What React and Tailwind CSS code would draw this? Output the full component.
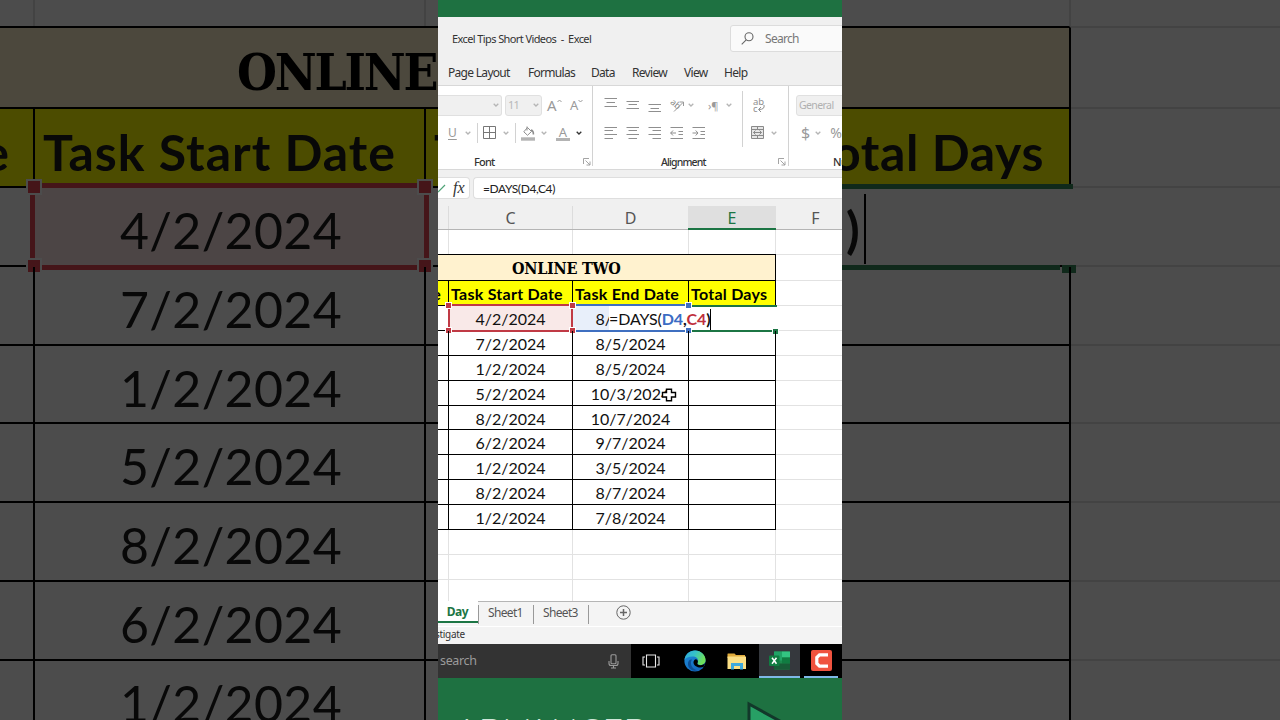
import clsx from 'clsx'

const rows = [
  ['4/2/2024', '8/5/2024'],
  ['7/2/2024', '8/5/2024'],
  ['1/2/2024', '8/5/2024'],
  ['5/2/2024', '10/3/2024'],
  ['8/2/2024', '10/7/2024'],
  ['6/2/2024', '9/7/2024'],
  ['1/2/2024', '3/5/2024'],
  ['8/2/2024', '8/7/2024'],
  ['1/2/2024', '7/8/2024'],
]

const tabs = [
  ['Page Layout', 'w-[80px]'],
  ['Formulas', 'w-[63px]'],
  ['Data', 'w-[41px]'],
  ['Review', 'w-[52px]'],
  ['View', 'w-[40px]'],
  ['Help', 'w-[40px]'],
]

function Chevron({ className = 'text-[#b5b5b5]' }) {
  return (
    <svg className={clsx('w-[6px] h-[4px] shrink-0', className)} viewBox="0 0 6 4" fill="none" stroke="currentColor" strokeWidth="1.3">
      <path d="M0.7 0.7 L3 3 L5.3 0.7" />
    </svg>
  )
}

function Lines({ d }) {
  return (
    <svg className="w-[14px] h-[14px] shrink-0" viewBox="0 0 14 14" fill="none" stroke="#8f8f8f" strokeWidth="1">
      <path d={d} />
    </svg>
  )
}

function Launcher() {
  return (
    <svg className="w-[8px] h-[8px] shrink-0" viewBox="0 0 8 8" fill="none" stroke="#9a9a9a" strokeWidth="0.9">
      <path d="M0.5 6 V0.5 H6 M2.5 2.5 L7 7 M7 3.5 V7 H3.5" />
    </svg>
  )
}

function Ribbon() {
  return (
    <div className="flex h-[85px] shrink-0 bg-white border-y border-[#d8d8d8] text-[#9a9a9a]">
      {/* Font */}
      <div className="w-[155px] shrink-0 border-r border-[#d2d2d2] mb-[3px] pt-[5px]">
        <div className="flex items-center h-[28px]">
          <div className="flex items-center justify-end w-[64px] h-[21px] pr-[2px] bg-[#f0f0f0] border border-l-0 border-[#e0e0e0] rounded-r-[3px]">
            <Chevron />
          </div>
          <div className="flex items-center justify-between w-[37px] h-[21px] ml-[3px] px-[2px] bg-[#f0f0f0] border border-[#e0e0e0] rounded-[3px]">
            <span className="text-[11px] tracking-[-0.8px] text-[#b8b8b8]">11</span>
            <Chevron />
          </div>
          <div className="flex w-[23px] ml-[5px] text-[15px] leading-none">
            A
            <svg className="w-[5px] h-[4px] mt-[1px]" viewBox="0 0 5 4" fill="none" stroke="currentColor">
              <path d="M0.5 3 L2.5 1 L4.5 3" />
            </svg>
          </div>
          <div className="flex text-[13px] leading-none">
            A
            <svg className="w-[5px] h-[4px]" viewBox="0 0 5 4" fill="none" stroke="currentColor">
              <path d="M0.5 1 L2.5 3 L4.5 1" />
            </svg>
          </div>
        </div>
        <div className="flex items-center h-[28px]">
          <span className="w-[27px] pl-[10px] text-[12px] underline underline-offset-2">U</span>
          <Chevron />
          <div className="w-px h-[20px] ml-[6px] bg-[#d2d2d2]" />
          <svg className="w-[14px] h-[14px] ml-[5px] mr-[6px]" viewBox="0 0 14 14" fill="none" stroke="#777">
            <path d="M0.5 0.5 H12.5 V12.5 H0.5 Z M6.5 0.5 V12.5 M0.5 6.5 H12.5" />
          </svg>
          <Chevron />
          <div className="w-px h-[20px] ml-[6px] bg-[#d2d2d2]" />
          <svg className="w-[14px] h-[15px] ml-[5px] mr-[6px]" viewBox="0 0 14 15" fill="none" stroke="#8d8d8d">
            <path d="M6 0.5 V4.5 M6.5 1.5 L10.5 5.5 L6.5 9.3 L2.8 5.8 Z" />
            <path d="M10 4 Q12.6 4.6 12.4 8.5" strokeWidth="1.6" />
            <path d="M0 13 H14" strokeWidth="3.4" stroke="#b3b3b3" />
          </svg>
          <Chevron />
          <div className="flex flex-col items-center w-[14px] ml-[9px] mr-[6px]">
            <span className="text-[13px] leading-[12px]">A</span>
            <div className="w-[14px] h-[3px] bg-[#b3b3b3]" />
          </div>
          <Chevron className="text-[#333]" />
        </div>
        <div className="flex items-center h-[16px] mt-[7px]">
          <span className="w-[145px] pl-[36px] text-[11px] tracking-[-0.8px] font-medium text-[#333]">Font</span>
          <Launcher />
        </div>
      </div>

      {/* Alignment */}
      <div className="w-[196px] shrink-0 border-r border-[#d2d2d2] mb-[3px] pt-[5px]">
        <div className="flex">
          <div className="w-[150px] border-r border-[#d2d2d2]">
            <div className="flex items-center h-[28px] pl-[11px]">
              <Lines d="M0.5 0.5 H13 M2.5 4.5 H11 M0.5 8.5 H13" />
              <div className="w-[8px]" />
              <Lines d="M0.5 3.5 H13 M2.5 6.5 H11 M0.5 10.5 H13" />
              <div className="w-[8px]" />
              <Lines d="M0.5 6.5 H13 M2.5 10.5 H11 M0.5 13.5 H13" />
              <svg className="w-[15px] h-[15px] ml-[8px] mr-[3px]" viewBox="0 0 15 15" fill="none" stroke="#999">
                <text x="0" y="8" fontSize="9" fill="#888" stroke="none" transform="rotate(40 4 6)">ab</text>
                <path d="M4 13.5 L13 4.5 M9.5 4 H13.5 V8" />
              </svg>
              <Chevron />
              <span className="ml-[14px] mr-[5px] w-[13px] text-[11px] leading-none tracking-tight whitespace-nowrap">›¶</span>
              <Chevron />
            </div>
            <div className="flex items-center h-[28px] pl-[11px]">
              <Lines d="M0.5 1.5 H13 M0.5 4.5 H9 M0.5 8.5 H13 M0.5 12.5 H9" />
              <div className="w-[8px]" />
              <Lines d="M0.5 1.5 H13 M2.5 4.5 H11 M0.5 8.5 H13 M2.5 12.5 H11" />
              <div className="w-[8px]" />
              <Lines d="M0.5 1.5 H13 M4.5 4.5 H13 M0.5 8.5 H13 M4.5 12.5 H13" />
              <div className="w-[8px]" />
              <Lines d="M0.5 1.5 H13 M8.5 5.5 H13 M8.5 8.5 H13 M0.5 12.5 H13 M0.5 7 H6 M3 4.5 L0.7 7 L3 9.5" />
              <div className="w-[8px]" />
              <Lines d="M0.5 1.5 H13 M8.5 5.5 H13 M8.5 8.5 H13 M0.5 12.5 H13 M0.5 7 H6 M3.7 4.5 L6 7 L3.7 9.5" />
            </div>
          </div>
          <div>
            <div className="flex items-center h-[28px] pl-[9px]">
              <svg className="w-[14px] h-[15px]" viewBox="0 0 14 15" fill="none" stroke="#8f8f8f">
                <text x="1" y="7" fontSize="9.5" fill="#8f8f8f" stroke="none">ab</text>
                <text x="1" y="14" fontSize="9.5" fill="#8f8f8f" stroke="none">c</text>
                <path d="M12 7 Q13 11.5 7 11.5 M9 9 L6.5 11.5 L9 14" />
              </svg>
            </div>
            <div className="flex items-center h-[28px] pl-[8px]">
              <svg className="w-[14px] h-[14px] mr-[6px]" viewBox="0 0 14 14" fill="none" stroke="#8a8a8a">
                <path d="M0.5 0.5 H12.5 V12.5 H0.5 Z" fill="#e6e6e6" />
                <path d="M0.5 3.5 H12.5 M0.5 9.5 H12.5 M6.5 0.5 V3.5 M6.5 9.5 V12.5" />
                <path d="M2.5 6.5 H10.5 M4.5 4.5 L2.5 6.5 L4.5 8.5 M8.5 4.5 L10.5 6.5 L8.5 8.5" />
              </svg>
              <Chevron />
            </div>
          </div>
        </div>
        <div className="flex items-center h-[16px] mt-[7px]">
          <span className="w-[185px] pl-[68px] pt-px text-[10.5px] tracking-[-0.85px] font-medium text-[#333]">Alignment</span>
          <Launcher />
        </div>
      </div>

      {/* Number */}
      <div className="w-[53px] shrink-0 overflow-hidden pt-[5px]">
        <div className="flex items-center h-[28px] pl-[7px]">
          <div className="flex items-center w-[80px] shrink-0 h-[21px] pl-[2px] pt-px bg-[#f0f0f0] border border-[#e0e0e0] rounded-[3px] text-[10.5px] tracking-[-0.6px] text-[#b0b0b0]">
            General
          </div>
        </div>
        <div className="flex items-center h-[28px] pl-[12px]">
          <span className="w-[20px] text-[16px] leading-none">$</span>
          <Chevron />
          <span className="ml-[9px] text-[14px] leading-none">%</span>
        </div>
        <div className="h-[16px] mt-[7px] pl-[44px] text-[11px] leading-[16px] tracking-[-0.5px] font-medium text-[#333]">Number</div>
      </div>
    </div>
  )
}

function Handle({ className }) {
  return <div className={clsx('absolute size-[7px] border border-white', className)} />
}

function Sheet() {
  return (
    <div className="h-[371px] shrink-0 overflow-hidden bg-white font-['Lato',sans-serif] text-black">
      <div className="flex h-[25px] border-b border-[#e2e2e2]">
        <div className="w-[11px] border-r border-[#e2e2e2]" />
        <div className="w-[124px] border-r border-[#e2e2e2]" />
        <div className="w-[116px] border-r border-[#e2e2e2]" />
        <div className="w-[87px] border-r border-[#e2e2e2]" />
      </div>
      <div className="flex h-[26px]">
        <div className="w-[338px] pl-[74px] -mt-px border border-l-0 border-black bg-[#fff2cf] font-['DejaVu_Serif_Condensed','DejaVu_Serif',serif] font-bold text-[16px] leading-[28px] tracking-[-0.25px] whitespace-nowrap">
          ONLINE TWO
        </div>
        <div className="flex-1 border-b border-[#e2e2e2]" />
      </div>
      <div className="flex h-[25px] text-[16px] leading-[26px] tracking-[0.25px] font-bold whitespace-nowrap">
        <div className="flex justify-end w-[11px] pr-[7px] border-r border-b border-black bg-[#ffff00]">e</div>
        <div className="w-[124px] pl-[2px] border-r border-b border-black bg-[#ffff00]">Task Start Date</div>
        <div className="w-[116px] pl-[2px] border-r border-b border-black bg-[#ffff00]">Task End Date</div>
        <div className="w-[87px] pl-[2px] border-r border-b border-black bg-[#ffff00]">Total Days</div>
        <div className="flex-1 border-b border-[#e2e2e2]" />
      </div>
      {rows.map(([start, end], i) => (
        <div key={i} className="relative flex h-[24.9px] text-[16px] leading-[26px] text-[#111] text-center whitespace-nowrap">
          <div className="w-[11px] border-r border-b border-black" />
          <div className={clsx('w-[124px] border-r border-b border-black', i === 0 && 'bg-[#f9e9e8]')}>{start}</div>
          <div className={clsx('w-[116px] border-r border-b border-black', i === 0 && 'bg-[#e8effa]')}>{end}</div>
          <div className="w-[87px] border-r border-b border-black" />
          <div className="flex-1 border-b border-[#e2e2e2]" />
          {i === 0 && (
            <>
              {/* formula being typed in E4, spills left over D4 */}
              <div className="absolute left-[171px] right-0 top-0 bottom-px flex items-center pt-[3px] bg-white text-[16px] tracking-[-0.12px]">
                <span>=DAYS(</span>
                <b className="text-[#3b6cc4]">D4</b>
                <b>,</b>
                <b className="text-[#bf2f3d]">C4</b>
                <b>)</b>
                <div className="w-px h-[21px] bg-black" />
              </div>
              <div className="absolute left-[10px] top-[-2px] w-[125px] h-[28px] border-2 border-[#c03a45]" />
              <div className="absolute left-[135px] top-[-2px] w-[115px] h-[28px] border-y-2 border-[#3f6fc0]" />
              <div className="absolute left-[250px] top-[-1px] w-[89px] h-[27px] border-y-2 border-[#1c7544]" />
              <Handle className="left-[7px] top-[-4px] bg-[#c03a45]" />
              <Handle className="left-[131px] top-[-4px] bg-[#c03a45]" />
              <Handle className="left-[7px] top-[21px] bg-[#c03a45]" />
              <Handle className="left-[131px] top-[21px] bg-[#c03a45]" />
              <Handle className="left-[247px] top-[-4px] bg-[#3f6fc0]" />
              <Handle className="left-[247px] top-[21px] bg-[#3f6fc0]" />
              <Handle className="left-[334px] top-[22px] bg-[#1c7544]" />
            </>
          )}
          {i === 3 && (
            <svg className="absolute left-[223px] top-[7px] w-[16px] h-[14px]" viewBox="0 0 16 14" fill="#fff" stroke="#000" strokeWidth="1.4">
              <path d="M5.5 1.2 H10.5 V4.5 H14.5 V9 H10.5 V12.8 H5.5 V9 H1.5 V4.5 H5.5 Z" />
            </svg>
          )}
        </div>
      ))}
      {[0, 1, 2].map((i) => (
        <div key={i} className="flex h-[24.9px] border-b border-[#e2e2e2]">
          <div className="w-[11px] border-r border-[#e2e2e2]" />
          <div className="w-[124px] border-r border-[#e2e2e2]" />
          <div className="w-[116px] border-r border-[#e2e2e2]" />
          <div className="w-[87px] border-r border-[#e2e2e2]" />
        </div>
      ))}
    </div>
  )
}

function Taskbar() {
  return (
    <div className="flex h-[34px] shrink-0 bg-black">
      <div className="flex items-center w-[193px] pl-[2px] bg-[#333] text-[12.5px] tracking-[-0.35px] text-[#9b9b9b]">
        <span className="w-[168px] pt-px">search</span>
        <svg className="w-[11px] h-[15px]" viewBox="0 0 11 15" fill="none" stroke="#9b9b9b" strokeWidth="1.1">
          <rect x="3" y="0.7" width="5" height="9" rx="1" />
          <path d="M1 7 V9.5 Q1 11.5 3 11.5 H8 Q10 11.5 10 9.5 V7 M5.5 11.5 V14 M3 14 H8" />
        </svg>
      </div>
      <div className="flex items-center w-[128px] pl-[11px]">
        <svg className="w-[18px] h-[14px]" viewBox="0 0 18 14" fill="none" stroke="#e8e8e8" strokeWidth="1.1">
          <path d="M4.5 1 H13.5 V13 H4.5 Z M3 3 H1 V11 H3 M15 3 H17 V11 H15" />
        </svg>
        <svg className="w-[22px] h-[22px] ml-[24px]" viewBox="0 0 22 22">
          <defs>
            <linearGradient id="edgeTop" x1="0" y1="0" x2="1" y2="0.4">
              <stop offset="0" stopColor="#2fa8e0" />
              <stop offset="0.5" stopColor="#35c1c8" />
              <stop offset="1" stopColor="#6fe05a" />
            </linearGradient>
            <linearGradient id="edgeLow" x1="0" y1="0" x2="0.8" y2="1">
              <stop offset="0" stopColor="#1f8fdc" />
              <stop offset="1" stopColor="#1263b8" />
            </linearGradient>
          </defs>
          <circle cx="11" cy="11" r="10.6" fill="url(#edgeLow)" />
          <path d="M0.5 10 C1 4 6 0.4 11 0.4 C17 0.4 21.6 5 21.6 10 C21.6 13.5 19 15 16.5 15 C14 15 12.8 14 13.6 12.8 C15 10.5 13.5 6.8 9.5 6.6 C5 6.4 1.5 8 0.5 10 Z" fill="url(#edgeTop)" />
          <path d="M8 9.5 C5.5 13 7.5 19 13 20.3 C9 22 3.5 18.5 4 13 C4.2 10.8 6 9 8 9.5 Z" fill="#0c4f96" />
          <path d="M13.6 12.8 C12.8 14 14 15.2 16.5 15.2 C18.5 15.2 20 14.4 21.2 13 L20 16.4 C17 18.5 10.5 17.5 9.5 13 C9.2 11 10.5 9.3 12 9.2 C13.8 9.6 14.3 11.5 13.6 12.8 Z" fill="#000" />
        </svg>
        <svg className="w-[20px] h-[17px] ml-[21px]" viewBox="0 0 20 17">
          <path d="M0.5 1 Q0.5 0.4 1 0.4 H7.5 L9 2 H18 V5 H0.5 Z" fill="#e0ab3c" />
          <path d="M0.5 3.5 H19 V16 H0.5 Z" fill="#fbdf85" />
          <path d="M4 16.5 V10 H16 V16.5 H13 V13 H7 V16.5 Z" fill="#3fa9dc" />
        </svg>
      </div>
      <div className="flex items-center justify-center w-[41px] bg-[#35383d] border-b-2 border-[#7fb8e8]">
        <svg className="w-[21px] h-[19px] mt-px" viewBox="0 0 21 19">
          <rect x="5" y="0.5" width="16" height="18" rx="1" fill="#1d8a4e" />
          <rect x="5" y="0.5" width="8" height="9" fill="#21a366" />
          <rect x="13" y="0.5" width="8" height="6" fill="#33c481" />
          <rect x="13" y="6.5" width="8" height="6" fill="#107c41" />
          <rect x="5" y="12.5" width="16" height="6" fill="#185c37" />
          <rect x="0" y="4.5" width="10.5" height="10.5" rx="1" fill="#107c41" />
          <path d="M3 6.8 L7.5 12.8 M7.5 6.8 L3 12.8" stroke="#fff" strokeWidth="1.5" />
        </svg>
      </div>
      <div className="flex items-center justify-center w-[34px] ml-[4px] border-b-2 border-[#7fb8e8]">
        <svg className="w-[21px] h-[21px] mt-px" viewBox="0 0 21 21">
          <rect width="21" height="21" rx="2" fill="#f0533f" />
          <path d="M17 4.8 H8.5 L5.8 7.5 V13.5 L8.5 16.2 H17" fill="none" stroke="#fff" strokeWidth="3.2" />
        </svg>
      </div>
    </div>
  )
}

function Phone() {
  return (
    <div className="flex flex-col w-[404px] h-[720px] shrink-0 overflow-hidden bg-[#f0f0f0] font-['Noto_Sans',sans-serif] text-[#333]">
      <div className="h-[17px] shrink-0 bg-[#1e7141]" />
      <div className="flex items-center h-[43px] shrink-0 pl-[14px]">
        <div className="w-[278px] shrink-0 pt-px text-[11px] tracking-[-0.6px] whitespace-pre">Excel Tips Short Videos  -  Excel</div>
        <div className="flex items-center w-[160px] shrink-0 h-[27px] bg-[#fafafa] border border-[#dcdcdc] rounded-[3px] pl-[10px]">
          <svg className="w-[13px] h-[13px]" viewBox="0 0 13 13" fill="none" stroke="#666" strokeWidth="1.1">
            <circle cx="8" cy="4.8" r="4" />
            <path d="M5.2 7.8 L0.7 12.4" />
          </svg>
          <span className="ml-[11px] pt-px text-[12px] tracking-[-0.7px] text-[#777]">Search</span>
        </div>
      </div>
      <div className="flex items-center h-[25px] shrink-0 pl-[10px] text-[12px] tracking-[-0.7px] whitespace-nowrap">
        {tabs.map(([name, width]) => (
          <div key={name} className={clsx('shrink-0', width)}>{name}</div>
        ))}
      </div>
      <Ribbon />

      {/* formula bar */}
      <div className="flex items-center h-[36px] shrink-0">
        <div className="flex items-center h-[22px] w-[32px] bg-white border border-l-0 border-[#dedede] rounded-r-[4px]">
          <svg className="w-[8px] h-[9px] mr-[7px]" viewBox="0 0 8 9" fill="none" stroke="#4fa377" strokeWidth="1.2">
            <path d="M0 8 L7 1" />
          </svg>
          <span className="font-['Liberation_Serif',serif] italic text-[16px] leading-none text-[#333]">fx</span>
        </div>
        <div className="flex-1 h-[22px] ml-[3px] pl-[9px] bg-white border border-r-0 border-[#dedede] rounded-l-[4px] font-['Lato',sans-serif] text-[12px] leading-[22px] tracking-[-0.4px] text-[#222]">
          =DAYS(D4,C4)
        </div>
      </div>

      {/* column letters */}
      <div className="flex h-[24px] shrink-0 border-b border-[#b5b5b5] text-[16px] leading-[24px] text-[#555] text-center">
        <div className="w-[11px] shrink-0 border-r border-[#dcdcdc]" />
        <div className="w-[124px] shrink-0 border-r border-[#dcdcdc]">C</div>
        <div className="w-[115px] shrink-0">D</div>
        <div className="w-[88px] shrink-0 -mb-px border-b-2 border-[#1c7544] bg-[#dfdfdf] text-[#1c7544]">E</div>
        <div className="w-[79px] shrink-0">F</div>
      </div>
      <Sheet />

      {/* sheet tabs */}
      <div className="flex h-[25px] shrink-0 bg-[#f4f4f4] text-[12px] leading-[22px] tracking-[-0.65px]">
        <div className="flex justify-end w-[40px] shrink-0 h-[22px] pr-[10px] bg-white border-b-2 border-[#1c7544] font-bold tracking-[-0.5px] text-[#1c7544]">Day</div>
        <div className="flex flex-1 items-center border-t border-[#b5b5b5] text-[#555]">
          <span className="w-[55px] h-[19px] pl-[9px] border-l border-[#999] leading-[16px]">Sheet1</span>
          <span className="w-[55px] h-[19px] pl-[9px] border-l border-[#999] leading-[16px]">Sheet3</span>
          <span className="w-[28px] h-[19px] border-l border-[#999]" />
          <svg className="w-[15px] h-[15px] -mt-[3px]" viewBox="0 0 15 15" fill="none" stroke="#666">
            <circle cx="7.5" cy="7.5" r="6.7" />
            <path d="M7.5 4 V11 M4 7.5 H11" strokeWidth="1.5" />
          </svg>
        </div>
      </div>
      <div className="h-[18px] shrink-0 bg-[#f3f3f3] border-t border-white text-[10px] leading-[15px] tracking-[-0.3px] text-[#333]">
        <span className="-ml-[3px]">stigate</span>
      </div>
      <Taskbar />

      <div className="flex flex-1 items-start bg-[#1e7141] overflow-hidden">
        <div className="w-[308px] pl-[17px] pt-[30px] font-['Lato',sans-serif] font-light text-[36px] leading-[44px] text-[#cfe6d8] whitespace-nowrap">
          ADVANCED
        </div>
        <svg className="w-[60px] h-[60px] mt-[22px]" viewBox="0 0 60 60" fill="#27a065" stroke="#12382a" strokeWidth="3">
          <path d="M3 4 L50 30 L3 56 Z" />
        </svg>
      </div>
    </div>
  )
}

function LeftBackdrop() {
  return (
    <div className="w-[438px] h-[720px] shrink-0 overflow-hidden bg-[#4c4c4c] font-['Lato',sans-serif] text-[#080808]">
      <div className="flex h-[28px] border-b-2 border-black">
        <div className="w-[35px] border-r-2 border-[#434343]" />
        <div className="w-[391px] border-r-2 border-[#434343]" />
      </div>
      <div className="h-[81px] pl-[237px] border-b-2 border-black bg-[#4c483d] font-['DejaVu_Serif_Condensed','DejaVu_Serif',serif] font-bold text-[51px] leading-[88px] tracking-[-2.2px] whitespace-nowrap overflow-hidden text-black">
        ONLINE
      </div>
      <div className="flex h-[79px] bg-[#4c4c00] text-[50px] leading-[87px] tracking-[1px] font-bold whitespace-nowrap">
        <div className="flex justify-end w-[35px] pr-[23px] border-r-2 border-b-2 border-black">e</div>
        <div className="w-[391px] pl-[8px] border-r-2 border-b-2 border-black">Task Start Date</div>
        <div className="w-[12px] pl-[8px] border-b-2 border-black overflow-hidden">T</div>
      </div>
      {rows.slice(0, 7).map(([start], i) => (
        <div key={i} className="relative flex h-[78.8px] text-[50px] leading-[85px] tracking-[0.35px] text-center whitespace-nowrap">
          <div className="w-[35px] shrink-0 border-r-2 border-b-2 border-black" />
          <div className={clsx('w-[391px] shrink-0 pl-[3px] border-r-2 border-b-2 border-black', i === 0 && 'bg-[#4c4545]')}>{start}</div>
          <div className="flex-1 border-b-2 border-black" />
          {i === 0 && (
            <>
              <div className="absolute left-[30px] top-[-5px] w-[399px] h-[87px] border-[5px] border-[#451519]" />
              <div className="absolute left-[26px] top-[-9px] size-[16px] border-2 border-[#4c4c4c] bg-[#451519]" />
              <div className="absolute left-[417px] top-[-9px] size-[16px] border-2 border-[#4c4c4c] bg-[#451519]" />
              <div className="absolute left-[26px] top-[70px] size-[16px] border-2 border-[#4c4c4c] bg-[#451519]" />
              <div className="absolute left-[417px] top-[70px] size-[16px] border-2 border-[#4c4c4c] bg-[#451519]" />
            </>
          )}
        </div>
      ))}
    </div>
  )
}

function RightBackdrop() {
  return (
    <div className="w-[438px] h-[720px] shrink-0 overflow-hidden bg-[#4c4c4c] font-['Lato',sans-serif] text-[#080808]">
      <div className="flex h-[28px]">
        <div className="w-[229px] border-r-2 border-b-2 border-r-[#434343] border-b-black" />
        <div className="flex-1 border-b-2 border-[#434343]" />
      </div>
      <div className="flex h-[81px]">
        <div className="w-[229px] border-r-2 border-b-2 border-black bg-[#4c483d]" />
        <div className="flex-1 border-b-2 border-[#434343]" />
      </div>
      <div className="flex h-[79px]">
        <div className="flex justify-end w-[229px] pr-[25px] border-r-2 border-black bg-[#4c4c00] overflow-hidden text-[50px] leading-[87px] tracking-[0.6px] font-bold whitespace-nowrap">
          Total Days
        </div>
        <div className="flex-1 border-b-2 border-[#434343]" />
      </div>
      {rows.slice(0, 7).map((_, i) => (
        <div key={i} className="relative flex h-[78.8px]">
          <div className={clsx('w-[229px] border-b-2 border-black', i > 0 && 'border-r-2')}>
            {i === 0 && (
              <div className="flex items-center h-full pt-[6px] pl-[4px] text-[50px] font-bold">
                <span>)</span>
                <div className="w-[2px] h-[70px] ml-[4px] bg-black" />
              </div>
            )}
          </div>
          <div className="flex-1 border-b-2 border-[#434343]" />
          {i === 0 && (
            <>
              <div className="absolute left-0 top-[-4px] w-[231px] h-[5px] bg-[#10291b]" />
              <div className="absolute left-0 top-[77px] w-[218px] h-[5px] bg-[#10291b]" />
              <div className="absolute left-[220px] top-[77px] w-[14px] h-[8px] bg-[#10291b]" />
            </>
          )}
        </div>
      ))}
    </div>
  )
}

export default function App() {
  return (
    <div className="flex w-[1280px] h-[720px] overflow-hidden">
      <LeftBackdrop />
      <Phone />
      <RightBackdrop />
    </div>
  )
}
